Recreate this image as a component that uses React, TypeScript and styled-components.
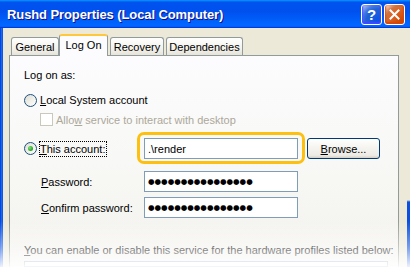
import React from "react";
import styled, { createGlobalStyle } from "styled-components";

const Global = createGlobalStyle`
  html, body { margin: 0; padding: 0; background: #fff; }
  body { font-family: "Liberation Sans", Arial, sans-serif; font-size: 11px; color: #000; }
`;

const Window = styled.div`
  position: relative;
  width: 410px;
  height: 267px;
  overflow: hidden;
  display: flex;
  flex-direction: column;
  background: #0842d6;
`;

const TitleBar = styled.div`
  flex: none;
  height: 28px;
  display: flex;
  align-items: center;
  padding: 0 5px 0 7px;
  box-sizing: border-box;
  background: linear-gradient(180deg, #0997ff, #0053ee 8%, #0050ee 40%, #06f 88%, #06f 93%, #005bff 95%, #003dd7 96%, #003dd7);
`;

const Title = styled.div`
  flex: 1;
  color: #fff;
  font-weight: bold;
  font-size: 13px;
  letter-spacing: -0.1px;
  text-shadow: 1px 1px #0f1089;
  white-space: nowrap;
`;

const CaptionButton = styled.div<{ $kind: "help" | "close" }>`
  width: 21px;
  height: 21px;
  box-sizing: border-box;
  margin-left: 2px;
  border: 1px solid #fff;
  border-radius: 3px;
  display: flex;
  align-items: center;
  justify-content: center;
  color: #fff;
  font-weight: bold;
  font-size: 15px;
  background: ${(p) =>
    p.$kind === "close"
      ? "radial-gradient(circle at 90% 90%, #cc4600 0%, #dc6527 55%, #cd7546 70%, #ffccb2 90%, #fff 100%)"
      : "radial-gradient(circle at 90% 90%, #0054e9 0%, #2263d5 55%, #4479e4 70%, #a3bbec 90%, #fff 100%)"};
  box-shadow: ${(p) =>
    p.$kind === "close" ? "inset 0 -1px 2px 1px #da4600" : "inset 0 -1px 2px 1px #4646ff"};
`;

const Frame = styled.div`
  flex: 1;
  display: flex;
  min-height: 0;
`;

const SideEdge = styled.div<{ $side: "left" | "right" }>`
  flex: none;
  width: 3px;
  background: ${(p) =>
    p.$side === "left"
      ? "linear-gradient(90deg, #0831d9, #166aee 50%, #0a4fe0)"
      : "linear-gradient(180deg, #ece9d8 0, #ece9d8 172px, #0a4fe0 174px, #0a4fe0 100%)"};
`;

const Body = styled.div`
  flex: 1;
  background: #ece9d8;
  padding: 6px 8px 0 6px;
  display: flex;
  flex-direction: column;
  min-width: 0;
`;

const TabStrip = styled.div`
  display: flex;
  align-items: flex-end;
  height: 21px;
  padding-left: 2px;
  position: relative;
  z-index: 1;
`;

const Tab = styled.div<{ $active?: boolean; $w: number }>`
  width: ${(p) => p.$w}px;
  box-sizing: border-box;
  height: ${(p) => (p.$active ? 22 : 18)}px;
  margin: ${(p) => (p.$active ? "0 2px -1px -2px" : "0 2px 0 0")};
  border: 1px solid #919b9c;
  border-bottom: none;
  border-top: ${(p) => (p.$active ? "2px solid #ffc83c" : "1px solid #919b9c")};
  border-radius: 3px 3px 0 0;
  background: ${(p) => (p.$active ? "#fcfcfe" : "linear-gradient(180deg, #fff 0%, #f3f2ed 60%, #e6e4d9 100%)")};
  display: flex;
  align-items: center;
  justify-content: center;
  padding-bottom: ${(p) => (p.$active ? 3 : 0)}px;
  white-space: nowrap;
`;

const Panel = styled.div`
  flex: 1;
  border: 1px solid #919b9c;
  border-bottom: none;
  background: linear-gradient(180deg, #fcfcfe 0%, #f7f7f4 60%, #f2f1ec 100%);
  padding: 12px 0 0 14px;
  display: flex;
  flex-direction: column;
  min-height: 0;
`;

const Text = styled.div<{ $disabled?: boolean; $mt?: number }>`
  line-height: 14px;
  white-space: nowrap;
  margin-top: ${(p) => p.$mt ?? 0}px;
  color: ${(p) => (p.$disabled ? "#aca899" : "#000")};
`;

const Row = styled.div<{ $mt: number; $h: number }>`
  display: flex;
  align-items: center;
  margin-top: ${(p) => p.$mt}px;
  height: ${(p) => p.$h}px;
`;

const Radio = styled.span<{ $checked?: boolean }>`
  position: relative;
  flex: none;
  width: 13px;
  height: 13px;
  box-sizing: border-box;
  border-radius: 50%;
  border: 1px solid #1c5180;
  background: linear-gradient(135deg, #dcdcd5 0%, #eeede5 45%, #fff 100%);
  margin-right: 3px;
  &::after {
    content: "";
    display: ${(p) => (p.$checked ? "block" : "none")};
    position: absolute;
    left: 3px;
    top: 3px;
    width: 5px;
    height: 5px;
    border-radius: 50%;
    background: radial-gradient(circle at 35% 35%, #7ee27a 0%, #21a121 70%, #1a8a1a 100%);
  }
`;

const Checkbox = styled.span`
  flex: none;
  width: 13px;
  height: 13px;
  box-sizing: border-box;
  border: 1px solid #cac8bb;
  background: #fff;
  margin: 0 3px 0 16px;
`;

const Focus = styled.span`
  outline: 1px dotted #000;
  outline-offset: 0;
  padding: 0 1px 0 0;
  line-height: 14px;
`;

const LabelCell = styled.div<{ $indent?: boolean }>`
  width: 120px;
  flex: none;
  display: flex;
  align-items: center;
  padding-left: ${(p) => (p.$indent ? 17 : 0)}px;
  box-sizing: border-box;
  white-space: nowrap;
`;

const Field = styled.div`
  width: 154px;
  height: 21px;
  box-sizing: border-box;
  border: 1px solid #7f9db9;
  background: #fff;
  display: flex;
  align-items: center;
  padding-left: 3px;
  white-space: nowrap;
`;

const Highlight = styled.div`
  position: relative;
  &::before {
    content: "";
    position: absolute;
    left: -7px;
    right: -7px;
    top: -6px;
    bottom: -5px;
    border: 3px solid #fdc010;
    border-radius: 7px;
    pointer-events: none;
  }
`;

const Dots = styled.span`
  font-family: "DejaVu Sans", sans-serif;
  font-size: 7.5px;
  letter-spacing: 0;
  line-height: 1;
`;

const Button = styled.div`
  width: 73px;
  height: 21px;
  box-sizing: border-box;
  margin-left: 9px;
  border: 1px solid #003c74;
  border-radius: 3px;
  background: linear-gradient(180deg, #fff 0%, #f4f3ee 50%, #ecebe6 86%, #d6d0c5 100%);
  display: flex;
  align-items: center;
  justify-content: center;
`;

const ListBox = styled.div`
  margin-top: 4px;
  width: 362px;
  height: 40px;
  border: 1px solid #7f9db9;
  background: #fff;
`;

const Fade = styled.div`
  position: absolute;
  left: 0;
  right: 0;
  bottom: 0;
  height: 46px;
  background: linear-gradient(180deg, rgba(255, 255, 255, 0) 0%, rgba(255, 255, 255, 0.45) 58%, rgba(255, 255, 255, 0.92) 100%);
  pointer-events: none;
`;

const U = styled.span`
  text-decoration: underline;
`;

const dots = "\u25CF".repeat(16);

export default function App() {
  return (
    <Window>
      <Global />
      <TitleBar>
        <Title>Rushd Properties (Local Computer)</Title>
        <CaptionButton $kind="help">?</CaptionButton>
        <CaptionButton $kind="close">
          <svg width="11" height="11" viewBox="0 0 11 11">
            <path d="M1.5 1.5 L9.5 9.5 M9.5 1.5 L1.5 9.5" stroke="#fff" strokeWidth="2" strokeLinecap="square" />
          </svg>
        </CaptionButton>
      </TitleBar>
      <Frame>
        <SideEdge $side="left" />
        <Body>
          <TabStrip>
            <Tab $w={48}>General</Tab>
            <Tab $w={49} $active>Log On</Tab>
            <Tab $w={54}>Recovery</Tab>
            <Tab $w={77}>Dependencies</Tab>
          </TabStrip>
          <Panel>
            <Text>Log on as:</Text>
            <Row $mt={11} $h={14}>
              <Radio />
              <Text>
                <U>L</U>ocal System account
              </Text>
            </Row>
            <Row $mt={6} $h={13}>
              <Checkbox />
              <Text $disabled>
                Allo<U>w</U> service to interact with desktop
              </Text>
            </Row>
            <Row $mt={12} $h={21}>
              <LabelCell>
                <Radio $checked />
                <Focus>
                  <U>T</U>his account:
                </Focus>
              </LabelCell>
              <Highlight>
                <Field>.\render</Field>
              </Highlight>
              <Button>
                <span>
                  <U>B</U>rowse...
                </span>
              </Button>
            </Row>
            <Row $mt={12} $h={21}>
              <LabelCell $indent>
                <U>P</U>assword:
              </LabelCell>
              <Field>
                <Dots>{dots}</Dots>
              </Field>
            </Row>
            <Row $mt={5} $h={21}>
              <LabelCell $indent>
                <U>C</U>onfirm password:
              </LabelCell>
              <Field>
                <Dots>{dots}</Dots>
              </Field>
            </Row>
            <Text $mt={25}>
              <U>Y</U>ou can enable or disable this service for the hardware profiles listed below:
            </Text>
            <ListBox />
          </Panel>
        </Body>
        <SideEdge $side="right" />
      </Frame>
      <Fade />
    </Window>
  );
}
